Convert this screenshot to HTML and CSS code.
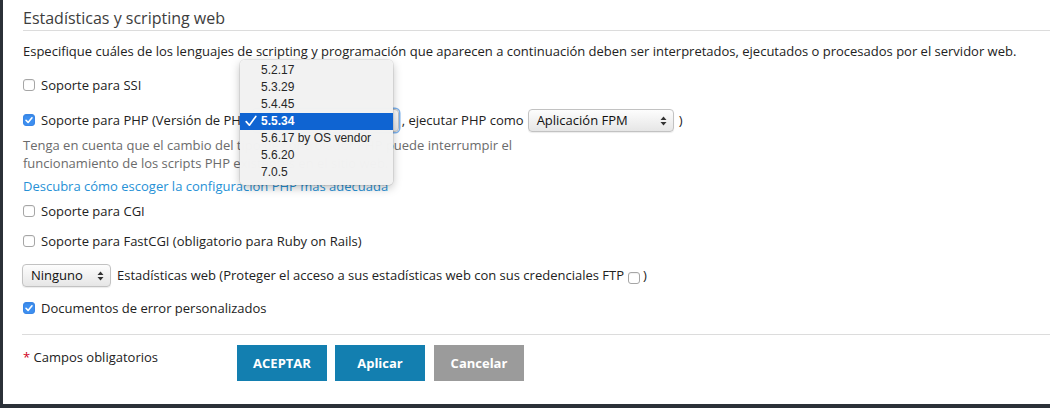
FILE: index.html
```html
<!DOCTYPE html>
<html lang="es">
<head>
<meta charset="utf-8">
<title>Estadísticas y scripting web</title>
<link rel="stylesheet" href="styles.css">
</head>
<body>
<div class="frame">
  <h2 class="title">Estadísticas y scripting web</h2>
  <p class="desc">Especifique cuáles de los lenguajes de scripting y programación que aparecen a continuación deben ser interpretados, ejecutados o procesados por el servidor web.</p>

  <div class="row row-ssi"><span class="cb"></span><span>Soporte para SSI</span></div>

  <div class="row row-php">
    <span class="cb checked"><svg viewBox="0 0 12 12" width="12" height="12"><path d="M3 6.3 L5.1 8.4 L9 3.8" fill="none" stroke="#fff" stroke-width="1.6" stroke-linecap="round" stroke-linejoin="round"/></svg></span>
    <span>Soporte para PHP (Versión de PHP</span>
    <span class="select sel-php focus">5.5.34<svg class="arr" viewBox="0 0 7 10" width="7" height="10"><path d="M0.5 4 L3.5 0.5 L6.5 4Z M0.5 6 L3.5 9.5 L6.5 6Z" fill="#333"/></svg></span>
    <span class="after-php">, ejecutar PHP como</span>
    <span class="select sel-fpm">Aplicación FPM<svg class="arr" viewBox="0 0 7 10" width="7" height="10"><path d="M0.5 4 L3.5 0.5 L6.5 4Z M0.5 6 L3.5 9.5 L6.5 6Z" fill="#333"/></svg></span>
    <span class="paren">)</span>
  </div>

  <p class="note">Tenga en cuenta que el cambio del tipo de controlador PHP puede interrumpir el<br>funcionamiento de los scripts PHP existentes en el sitio web.</p>
  <p class="link"><a href="#">Descubra cómo escoger la configuración PHP más adecuada</a></p>

  <div class="row row-cgi"><span class="cb"></span><span>Soporte para CGI</span></div>
  <div class="row row-fcgi"><span class="cb"></span><span>Soporte para FastCGI (obligatorio para Ruby on Rails)</span></div>

  <div class="row row-stats">
    <span class="select sel-stats">Ninguno<svg class="arr" viewBox="0 0 7 10" width="7" height="10"><path d="M0.5 4 L3.5 0.5 L6.5 4Z M0.5 6 L3.5 9.5 L6.5 6Z" fill="#333"/></svg></span>
    <span>Estadísticas web (Proteger el acceso a sus estadísticas web con sus credenciales FTP</span>
    <span class="cb ftp"></span>
    <span>)</span>
  </div>

  <div class="row row-docs"><span class="cb checked"><svg viewBox="0 0 12 12" width="12" height="12"><path d="M3 6.3 L5.1 8.4 L9 3.8" fill="none" stroke="#fff" stroke-width="1.6" stroke-linecap="round" stroke-linejoin="round"/></svg></span><span>Documentos de error personalizados</span></div>

  <div class="footer">
    <div class="req"><span class="star">*</span> Campos obligatorios</div>
    <div class="buttons">
      <button class="btn primary">ACEPTAR</button>
      <button class="btn primary apply">Aplicar</button>
      <button class="btn cancel">Cancelar</button>
    </div>
  </div>

  <ul class="popup">
    <li>5.2.17</li>
    <li>5.3.29</li>
    <li>5.4.45</li>
    <li class="sel"><svg class="tick" viewBox="0 0 12 12" width="12" height="12"><path d="M1.2 6.6 L4.4 10.2 L10.8 1.4" fill="none" stroke="#fff" stroke-width="1.7" stroke-linecap="round" stroke-linejoin="round"/></svg>5.5.34</li>
    <li>5.6.17 by OS vendor</li>
    <li>5.6.20</li>
    <li>7.0.5</li>
  </ul>
</div>
</body>
</html>
```
FILE: styles.css
```css
html, body {
  margin: 0;
  padding: 0;
  background: #fff;
}
body {
  font-family: "Open Sans", "Liberation Sans", sans-serif;
  font-size: 13px;
  color: #222;
  overflow: hidden;
}
.frame {
  position: relative;
  height: 404px;
  border-left: 3px solid #2b3138;
  border-bottom: 4px solid #2b3138;
  padding-left: 20px;
  box-sizing: content-box;
  width: 1027px;
}
.title {
  margin: 0;
  padding-top: 6px;
  height: 24px;
  line-height: 24px;
  font-size: 16px;
  font-weight: normal;
  color: #3d3d3d;
  border-bottom: 1px solid #dcdcdc;
}
.desc {
  margin: 11px 0 0;
  line-height: 18px;
}
.row {
  display: flex;
  align-items: center;
  height: 20px;
  white-space: nowrap;
}
.cb {
  width: 10px;
  height: 10px;
  border: 1px solid #a6a6a6;
  border-radius: 3px;
  background: #fff;
  margin-right: 6px;
  flex: none;
  position: relative;
  box-shadow: inset 0 1px 1px rgba(0,0,0,0.06);
}
.cb.checked {
  background: #3d8ff0;
  border-color: #3a86e6;
}
.cb svg {
  position: absolute;
  left: -1px;
  top: -1px;
}
.cb.ftp {
  margin: 0 3px 0 4px;
  transform: translateY(3px);
}
.row-ssi { margin-top: 15px; }
.row-php { margin-top: 13px; height: 24px; }
.after-php { margin-left: 3px; }
.note {
  margin: 4px 0 0;
  line-height: 18px;
  color: #6b6b6b;
}
.link {
  margin: 5px 0 0;
  line-height: 18px;
}
.link a {
  color: #2691d6;
  text-decoration: none;
}
.row-cgi { margin-top: 6px; }
.row-fcgi { margin-top: 10px; }
.row-stats { margin-top: 12px; height: 24px; margin-left: -1px; }
.row-docs { margin-top: 11px; }

.select {
  display: inline-flex;
  align-items: center;
  box-sizing: border-box;
  height: 23px;
  padding-left: 8px;
  border: 1px solid #c2c2c2;
  border-radius: 4px;
  background: linear-gradient(#fdfdfd, #e6e6e6);
  box-shadow: 0 1px 1px rgba(0,0,0,0.08);
  position: relative;
  color: #111;
}
.select .arr {
  position: absolute;
  right: 6px;
  top: 6px;
}
.sel-php {
  width: 146px;
  margin-left: 4px;
  box-shadow: 0 0 0 1.5px #7cb2ee;
}
.sel-fpm {
  width: 146px;
  margin-left: 4px;
}
.sel-stats {
  width: 89px;
  margin-right: 6px;
}
.paren { margin-left: 5px; }

.footer {
  margin-top: 16px;
  border-top: 1px solid #dcdcdc;
  padding-top: 10px;
  display: flex;
  align-items: flex-start;
  margin-left: -1px;
}
.req {
  width: 215px;
  padding-top: 2px;
  line-height: 20px;
  padding-left: 1px;
  box-sizing: border-box;
}
.star { color: #d0021b; }
.buttons { display: flex; }
.btn {
  width: 90px;
  height: 36px;
  border: 0;
  margin: 0 8px 0 0;
  font-family: "Open Sans", "Liberation Sans", sans-serif;
  font-size: 13px;
  font-weight: 700;
  color: #fff;
  padding: 0;
}
.btn.primary { background: #137fb0; }
.btn.apply { margin-right: 9px; }
.btn.cancel { background: #9b9b9b; }

.popup {
  position: absolute;
  left: 237px;
  top: 60px;
  width: 153px;
  margin: 0;
  padding: 2px 0 0;
  height: 125px;
  box-sizing: border-box;
  list-style: none;
  background: rgba(242,242,242,0.99);
  border-radius: 5px;
  box-shadow: 0 3px 10px rgba(0,0,0,0.25), 0 0 0 1px rgba(0,0,0,0.07);
  font-family: "Liberation Sans", Arial, sans-serif;
  font-size: 12px;
  color: #262626;
}
.popup li {
  height: 17px;
  line-height: 17px;
  padding-left: 21px;
  position: relative;
}
.popup li.sel {
  background: #0f64d2;
  color: #fff;
  font-weight: 700;
}
.tick {
  position: absolute;
  left: 5px;
  top: 2px;
}
```
